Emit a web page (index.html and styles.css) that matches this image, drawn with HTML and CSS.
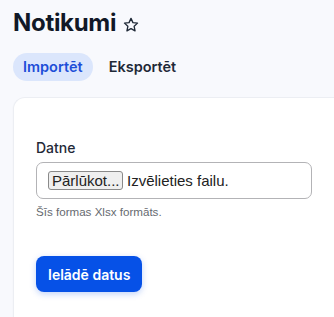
FILE: index.html
```html
<!DOCTYPE html>
<html lang="lv">
<head>
    <meta charset="UTF-8">
    <meta name="viewport" content="width=device-width, initial-scale=1.0">
    <title>Notikumi</title>
    <link rel="stylesheet" href="styles.css">
</head>
<body>
    <div class="page">
        <div class="page-header">
            <h1>Notikumi</h1>
            <svg class="star" viewBox="0 0 24 24" fill="none" stroke="currentColor" stroke-width="1.8" stroke-linejoin="round">
                <path d="M12 3.2l2.6 5.6 6.1.7-4.5 4.2 1.2 6.1L12 16.8l-5.4 3 1.2-6.1-4.5-4.2 6.1-.7z"/>
            </svg>
        </div>

        <div class="tabs">
            <button class="tab active">Importēt</button>
            <button class="tab">Eksportēt</button>
        </div>

        <div class="card">
            <form class="import-form">
                <label class="field-label" for="file">Datne</label>
                <div class="file-field">
                    <span class="browse-btn">Pārlūkot...</span>
                    <span class="file-name">Izvēlieties failu.</span>
                </div>
                <p class="hint">Šīs formas Xlsx formāts.</p>

                <button type="button" class="submit-btn">Ielādē datus</button>
            </form>
        </div>
    </div>
</body>
</html>
```

FILE: styles.css
```css
body {
    margin: 0;
    background-color: #f8f9fd;
    color: #111827;
    font-family: Inter, "Noto Sans", sans-serif;
    overflow: hidden;
}

.page {
    padding: 7px 0 0 13px;
}

.page-header {
    display: flex;
    align-items: center;
    gap: 6px;
}

h1 {
    margin: 0;
    font-size: 24px;
    line-height: 32px;
    font-weight: 700;
    letter-spacing: -0.3px;
    color: #111827;
}

.star {
    width: 18px;
    height: 18px;
    color: #1f2937;
    margin-top: 3px;
}

.tabs {
    display: flex;
    gap: 6px;
    margin-top: 14px;
}

.tab {
    border: none;
    background: none;
    font-family: inherit;
    font-size: 14.5px;
    line-height: 20px;
    font-weight: 600;
    color: #1f2937;
    padding: 4px 10px;
    border-radius: 14px;
}

.tab.active {
    background-color: #dbe6fc;
    color: #1d4ed8;
}

.card {
    margin-top: 16px;
    background-color: #fff;
    border: 1px solid #eceef3;
    border-right: none;
    border-radius: 12px 0 0 0;
    box-shadow: 0 1px 2px rgba(0, 0, 0, 0.04);
    padding: 40px 22px 40px 22px;
    min-height: 200px;
}

.field-label {
    display: block;
    font-size: 14px;
    line-height: 20px;
    font-weight: 500;
    color: #1f2937;
}

.file-field {
    margin-top: 4px;
    width: 276px;
    height: 37px;
    box-sizing: border-box;
    border: 1px solid #b3b3b6;
    border-radius: 7px;
    display: flex;
    align-items: center;
    padding-left: 11px;
    font-family: "Liberation Sans", Arial, sans-serif;
    font-size: 15px;
    color: #222;
}

.browse-btn {
    height: 19px;
    box-sizing: border-box;
    padding: 0 3px;
    width: 75px;
    border: 1px solid #8a8a8a;
    border-radius: 3px;
    background-color: #efefef;
    line-height: 17px;
    text-align: center;
}

.file-name {
    margin-left: 4px;
}

.hint {
    margin: 5px 0 0 0;
    font-family: "Liberation Sans", Arial, sans-serif;
    font-size: 11.6px;
    line-height: 16px;
    color: #666a70;
}

.submit-btn {
    margin-top: 36px;
    height: 36px;
    padding: 0 12px;
    border: none;
    border-radius: 8px;
    background-color: #0651e7;
    color: #fff;
    font-family: inherit;
    font-size: 14px;
    font-weight: 600;
    box-shadow: 0 2px 6px rgba(6, 81, 231, 0.25);
}
```
